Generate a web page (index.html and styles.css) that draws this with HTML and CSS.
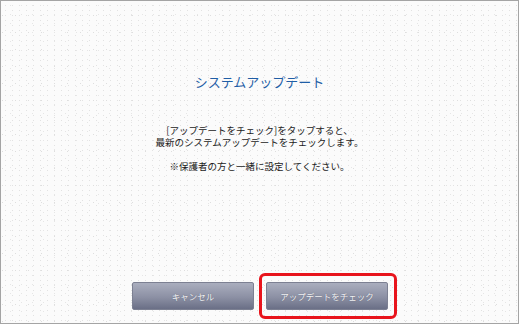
FILE: index.html
```html
<!DOCTYPE html>
<html lang="ja">
<head>
<meta charset="UTF-8">
<meta name="viewport" content="width=device-width, initial-scale=1.0">
<title>システムアップデート</title>
<link rel="stylesheet" href="styles.css">
</head>
<body>

<div class="screen">
    <h2 class="title">システムアップデート</h2>

    <div class="message">
        <p>[アップデートをチェック]をタップすると、<br>最新のシステムアップデートをチェックします。</p>
        <p>※保護者の方と一緒に設定してください。</p>
    </div>

    <div class="actions">
        <button class="btn">キャンセル</button>
        <button class="btn btn-marked">アップデートをチェック</button>
    </div>
</div>

</body>
</html>
```

FILE: styles.css
```css
body {
    margin: 0;
    background: #fff;
    font-family: "Noto Sans CJK JP", "Noto Sans", sans-serif;
}
.screen {
    width: 519px;
    height: 324px;
    box-sizing: border-box;
    border: 1px solid #a4a4a4;
    display: flex;
    flex-direction: column;
    align-items: center;
    background-color: #fbfbfb;
    background-image:
        radial-gradient(circle, #e2e2e2 0.6px, transparent 0.9px),
        radial-gradient(circle, #e6e6e6 0.6px, transparent 0.9px),
        radial-gradient(circle, #dedede 0.6px, transparent 0.9px);
    background-size: 7px 5px, 11px 9px, 13px 17px;
    background-position: 1px 2px, 4px 0, 8px 6px;
}
.title {
    margin: 73px 0 0;
    font-size: 13px;
    line-height: 16px;
    font-weight: normal;
    color: #1f5ea6;
}
.message {
    margin-top: 34px;
    text-align: center;
    font-size: 9.5px;
    line-height: 12px;
    color: #1a1a1a;
}
.message p {
    margin: 0 0 12px;
}
.actions {
    margin-top: auto;
    margin-bottom: 13px;
    display: flex;
    gap: 12px;
    padding-left: 1px;
}
.btn {
    position: relative;
    width: 122px;
    height: 28px;
    padding: 0;
    border: 1px solid #7c8092;
    border-radius: 2px;
    background: linear-gradient(#aaaebe, #8c90a4 55%, #6a6f86);
    color: #f4f4f6;
    font-family: inherit;
    font-size: 8.5px;
    text-shadow: 0 0 1px #55596c;
}
.btn-marked::after {
    content: "";
    position: absolute;
    top: -10px;
    bottom: -10px;
    left: -8px;
    right: -10px;
    border: 3px solid #e8141c;
    border-radius: 6px;
}
```
